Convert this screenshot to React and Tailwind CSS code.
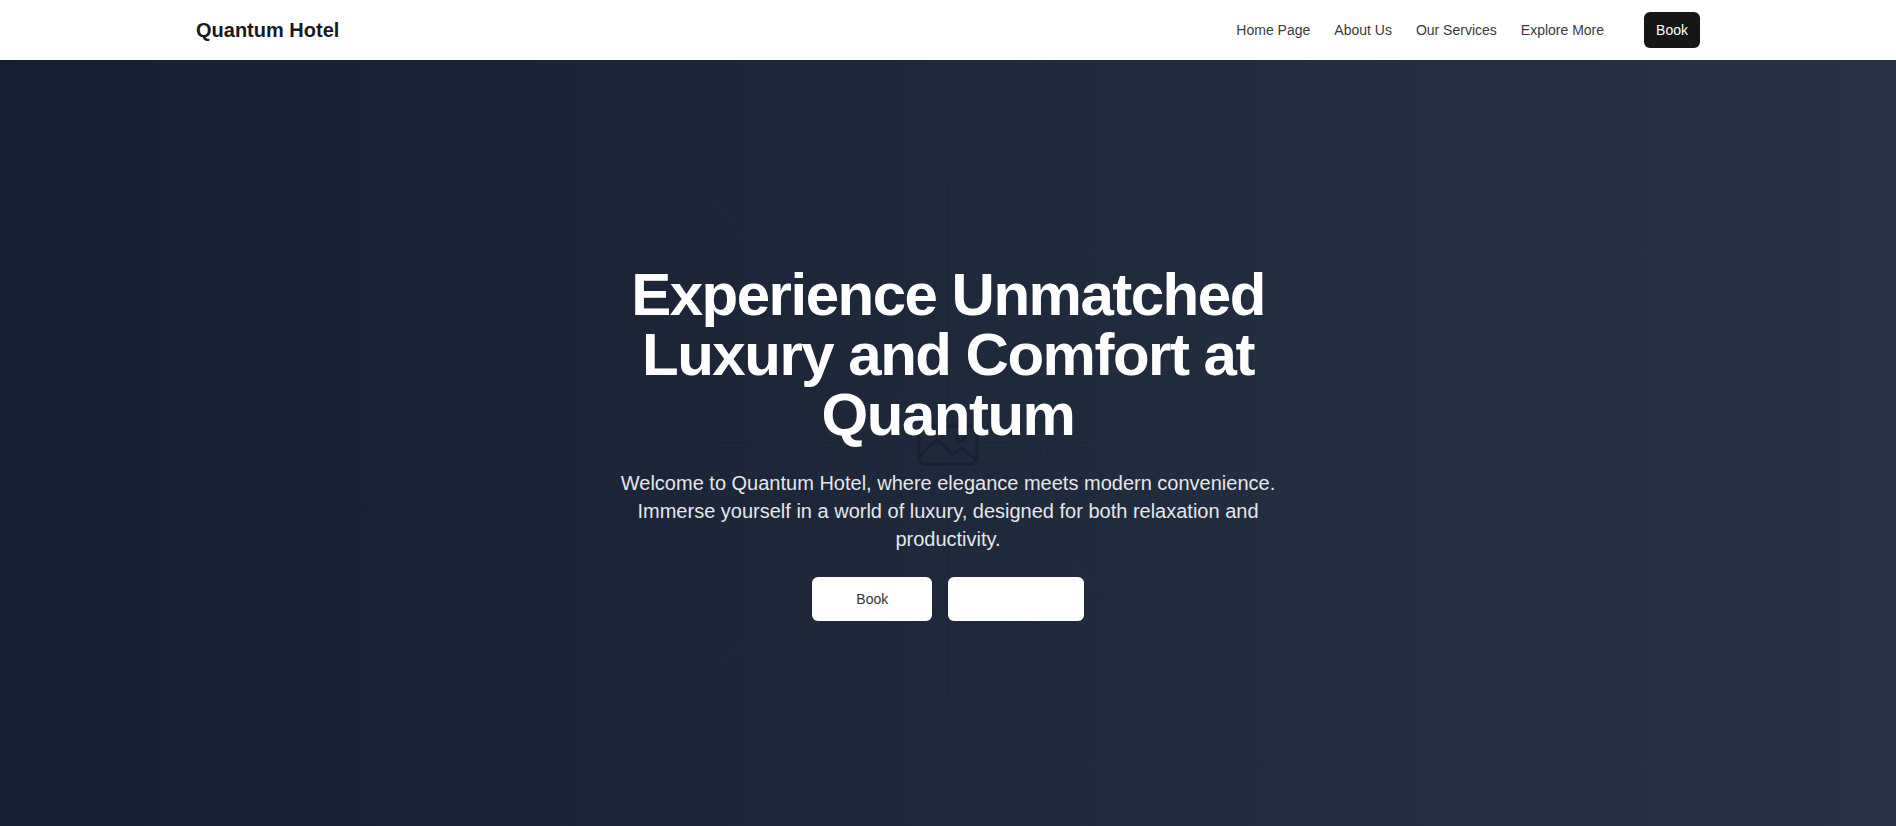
import React from "react";

const links = ["Home Page", "About Us", "Our Services", "Explore More"];

// faint placeholder artwork sitting behind the hero copy
const HeroPlaceholder = () => (
  <svg
    className="pointer-events-none absolute left-1/2 top-1/2 h-[520px] w-[520px] -translate-x-1/2 -translate-y-1/2"
    viewBox="0 0 520 520"
    fill="none"
    stroke="#0b1220"
    strokeWidth="1"
    strokeOpacity="0.12"
  >
    <line x1="0" y1="0" x2="520" y2="520" />
    <line x1="520" y1="0" x2="0" y2="520" />
    <line x1="260" y1="0" x2="260" y2="520" />
    <line x1="0" y1="260" x2="520" y2="260" />
    <circle cx="260" cy="260" r="100" />
    <g transform="translate(231 243)" strokeWidth="3" strokeOpacity="0.3">
      <rect x="0" y="0" width="58" height="38" rx="6" />
      <path d="M0 30 L18 14 L34 28 L42 22 L58 34" />
      <circle cx="42" cy="11" r="4" />
    </g>
  </svg>
);

const App = () => {
  return (
    <div className="min-h-screen font-['Liberation_Sans',Arial,sans-serif]">
      {/* Top nav */}
      <header className="h-[60px] bg-white">
        <div className="mx-auto flex h-full w-[1504px] items-center justify-between">
          <span className="text-xl font-bold text-[#171a22]">Quantum Hotel</span>
          <div className="flex items-center gap-10">
            <nav className="flex items-center gap-6 text-sm text-[#3a3a3a]">
              {links.map((l) => (
                <a key={l} href="#">
                  {l}
                </a>
              ))}
            </nav>
            <button className="rounded-md bg-[#161616] px-3 py-2 text-sm text-white">
              Book
            </button>
          </div>
        </div>
      </header>

      {/* Hero */}
      <section className="relative flex h-[766px] items-center justify-center overflow-hidden bg-gradient-to-r from-[#161e31] to-[#283446]">
        <HeroPlaceholder />
        <div className="relative flex flex-col items-center text-center">
          <h1 className="max-w-3xl text-6xl font-bold leading-none tracking-tight text-white">
            Experience Unmatched Luxury and Comfort at Quantum
          </h1>
          <p className="mt-6 max-w-2xl text-xl text-[#e4e6ea]">
            Welcome to Quantum Hotel, where elegance meets modern convenience.
            Immerse yourself in a world of luxury, designed for both relaxation
            and productivity.
          </p>
          <div className="mt-6 flex gap-4">
            <button className="h-11 rounded-md bg-white px-11 text-sm text-[#333]">
              Book
            </button>
            <button className="h-11 rounded-md bg-white px-11 text-sm text-white">
              Explore
            </button>
          </div>
        </div>
      </section>
    </div>
  );
};

export default App;
